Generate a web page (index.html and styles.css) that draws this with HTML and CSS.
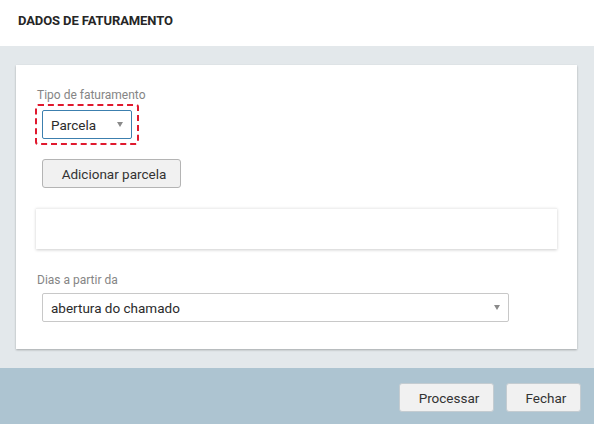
FILE: index.html
```html
<!DOCTYPE html>
<html lang="pt">
<head>
<meta charset="utf-8">
<title>Dados de faturamento</title>
<link rel="stylesheet" href="styles.css">
</head>
<body>
<div class="dialog">
  <header class="dialog-header">
    <h1 class="dialog-title">DADOS DE FATURAMENTO</h1>
  </header>
  <main class="dialog-body">
    <section class="card">
      <label class="field-label">Tipo de faturamento</label>
      <div class="focus-ring">
        <div class="select select-small select-active">
          <span class="select-value">Parcela</span>
          <span class="select-arrow"></span>
        </div>
      </div>
      <button class="btn btn-add" type="button">Adicionar parcela</button>
      <div class="panel"></div>
      <label class="field-label field-label-2">Dias a partir da</label>
      <div class="select select-wide">
        <span class="select-value">abertura do chamado</span>
        <span class="select-arrow"></span>
      </div>
    </section>
  </main>
  <footer class="dialog-footer">
    <button class="btn btn-process" type="button">Processar</button>
    <button class="btn btn-close" type="button">Fechar</button>
  </footer>
</div>
</body>
</html>
```
FILE: styles.css
```css
* { box-sizing: border-box; }
html, body {
  margin: 0;
  padding: 0;
  width: 594px;
  height: 424px;
  overflow: hidden;
  font-family: Roboto, "Liberation Sans", Arial, sans-serif;
  color: #333;
}
.dialog {
  display: flex;
  flex-direction: column;
  height: 424px;
}
.dialog-header {
  height: 46px;
  background: #fff;
  display: flex;
  align-items: center;
  padding-left: 18px;
}
.dialog-title {
  margin: 0;
  font-size: 13px;
  font-weight: 700;
  color: #262626;
  letter-spacing: -0.1px;
  position: relative;
  top: -3px;
}
.dialog-body {
  background: #e3e8eb;
  padding: 19px 17px 19px 16px;
  height: 322px;
}
.card {
  background: #fff;
  height: 284px;
  box-shadow: 0 1px 2px rgba(0, 0, 0, 0.28);
  padding: 22px 20px 0 20px;
  display: flex;
  flex-direction: column;
  align-items: flex-start;
}
.field-label {
  font-size: 12px;
  line-height: 16px;
  color: #858585;
  padding-left: 1px;
}
.field-label-2 {
  margin-top: 23px;
}
.focus-ring {
  margin-top: 1px;
  margin-left: -1px;
  border: 2px dashed #e0192e;
  border-radius: 3px;
  padding: 4px 5px 4px 5px;
}
.select {
  height: 29px;
  border: 1px solid #c8c8c8;
  border-radius: 2px;
  background: #fff;
  display: flex;
  align-items: center;
  justify-content: space-between;
  padding: 0 7px 0 8px;
  font-size: 13.5px;
  color: #2b2b2b;
}
.select-small { width: 90px; }
.select-active { border-color: #3c7fae; }
.select-wide {
  width: 467px;
  margin-left: 6px;
  margin-top: 5px;
}
.select-arrow {
  width: 0;
  height: 0;
  border-left: 3.5px solid transparent;
  border-right: 3.5px solid transparent;
  border-top: 5px solid #8a8a8a;
  margin-right: 1px;
}
.btn {
  height: 29px;
  background: #f1f1f1;
  border: 1px solid #b4b4b4;
  border-radius: 3px;
  font-family: Roboto, "Liberation Sans", Arial, sans-serif;
  font-size: 13.5px;
  color: #333;
  padding: 0 0 0 5px;
  cursor: pointer;
}
.btn-add {
  width: 139px;
  margin-top: 14px;
  margin-left: 6px;
}
.panel {
  width: 521px;
  height: 41px;
  margin-top: 20px;
  background: #fff;
  border-top: 1px solid #f0f0f0;
  box-shadow: 0 1px 3px rgba(0, 0, 0, 0.2);
}
.dialog-footer {
  flex: 1;
  background: #adc4d1;
  display: flex;
  justify-content: flex-end;
  align-items: flex-start;
  gap: 12px;
  padding: 15px 13px 0 0;
}
.btn-process { width: 95px; border-color: #c4ccd1; }
.btn-close { width: 75px; border-color: #c4ccd1; }
```
